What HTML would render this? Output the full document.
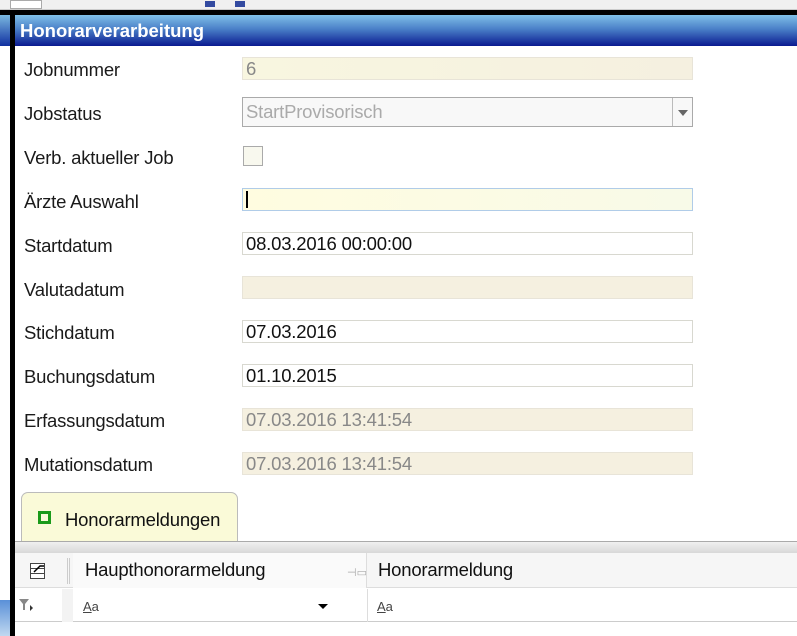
<!DOCTYPE html>
<html><head><meta charset="utf-8">
<style>
*{margin:0;padding:0;box-sizing:border-box}
body{width:797px;height:636px;overflow:hidden;background:#fff;font-family:"Liberation Sans",Arial,sans-serif;position:relative}
.abs{position:absolute}
.lbl{position:absolute;left:24px;font-size:18.5px;color:#1a1a1a;letter-spacing:-0.2px}
.fld{position:absolute;left:242px;width:451px;height:23px;border:1px solid #d8d8d0;font-size:18.5px;line-height:21px;padding:0 0 0 3px;color:#111;background:#fff;letter-spacing:-0.2px}
.ro{background:#f5f0e0;color:#888;border-color:#e8e4d8}
</style></head><body>
<div class="abs" style="left:0;top:0;width:797px;height:10px;background:#f0f0f0;border-bottom:1px solid #ccc"></div>
<div class="abs" style="left:10px;top:0;width:32px;height:9px;border:1px solid #aaa;background:#fff"></div>
<div class="abs" style="left:205px;top:1px;width:10px;height:6px;background:#334aa0"></div>
<div class="abs" style="left:235px;top:1px;width:10px;height:6px;background:#334aa0"></div>
<div class="abs" style="left:0;top:10px;width:797px;height:5px;background:#000"></div>
<div class="abs" style="left:10px;top:10px;width:5px;height:626px;background:#000"></div>
<div class="abs" style="left:0;top:15px;width:10px;height:31px;background:linear-gradient(#7ab8e0,#1030a0)"></div>
<div class="abs" style="left:0;top:600px;width:10px;height:36px;background:linear-gradient(#5a90d8,#c0d8f0)"></div>
<div class="abs" style="left:15px;top:15px;width:782px;height:31px;background:linear-gradient(#80c0e8 0%,#4a80c8 45%,#0a1a90 100%);color:#fff;font-weight:bold;font-size:18.5px;padding:5px 0 0 5px">Honorarverarbeitung</div>

<div class="lbl" style="top:59px">Jobnummer</div>
<div class="fld ro" style="top:57px;background:linear-gradient(90deg,#f8f6e0,#f5f0e0)">6</div>
<div class="lbl" style="top:103px">Jobstatus</div>
<div class="fld" style="top:97px;height:30px;border-color:#aaa;background:#f8f8f8;color:#aaa;line-height:28px">StartProvisorisch
<div class="abs" style="right:0;top:0;width:20px;height:28px;border-left:1px solid #bbb"><div class="abs" style="left:5px;top:12px;border-left:5px solid transparent;border-right:5px solid transparent;border-top:6px solid #666"></div></div></div>
<div class="lbl" style="top:147px">Verb. aktueller Job</div>
<div class="abs" style="left:243px;top:146px;width:20px;height:20px;border:1px solid #aaa;background:#f8f8ee"></div>
<div class="lbl" style="top:191px">Ärzte Auswahl</div>
<div class="fld" style="top:188px;background:linear-gradient(90deg,#fffce0,#f8fae8);border-color:#b0cce8"><span style="display:inline-block;width:2px;height:17px;background:#000;margin-top:2px"></span></div>
<div class="lbl" style="top:235px">Startdatum</div>
<div class="fld" style="top:232px">08.03.2016 00:00:00</div>
<div class="lbl" style="top:279px">Valutadatum</div>
<div class="fld ro" style="top:276px"></div>
<div class="lbl" style="top:322px">Stichdatum</div>
<div class="fld" style="top:320px">07.03.2016</div>
<div class="lbl" style="top:366px">Buchungsdatum</div>
<div class="fld" style="top:364px">01.10.2015</div>
<div class="lbl" style="top:410px">Erfassungsdatum</div>
<div class="fld ro" style="top:408px">07.03.2016 13:41:54</div>
<div class="lbl" style="top:454px">Mutationsdatum</div>
<div class="fld ro" style="top:452px">07.03.2016 13:41:54</div>

<div class="abs" style="left:21px;top:492px;width:217px;height:50px;background:#fafad8;border:1px solid #bbb;border-bottom:none;border-radius:7px 7px 0 0"></div>
<div class="abs" style="left:38px;top:511px;width:13px;height:13px;border:3px solid #1a9a1a"></div>
<div class="abs" style="left:65px;top:509px;font-size:18.5px;color:#111;letter-spacing:-0.2px">Honorarmeldungen</div>
<div class="abs" style="left:15px;top:541px;width:782px;height:12px;background:linear-gradient(#f0f0f0,#d8d8d8);border-top:1px solid #aaa"></div>
<div class="abs" style="left:15px;top:553px;width:782px;height:35px;background:#f6f6f6;border-bottom:1px solid #ddd"></div>
<svg class="abs" style="left:28px;top:560px" width="22" height="22" viewBox="0 0 22 22"><g fill="#fff" stroke="#444" stroke-width="1"><rect x="2.5" y="3.5" width="14" height="5"/><rect x="2.5" y="8.5" width="14" height="5"/><rect x="2.5" y="13.5" width="14" height="5"/></g><path d="M6 12 L12 6 L16 6" stroke="#000" stroke-width="1.5" fill="none"/></svg>
<div class="abs" style="left:67px;top:558px;width:3px;height:26px;border-left:1px solid #ccc;border-right:1px solid #ccc"></div>
<div class="abs" style="left:73px;top:553px;width:294px;height:35px;border-right:1px solid #ddd;background:#fafafa"></div>
<div class="abs" style="left:85px;top:559px;font-size:18.5px;color:#111;letter-spacing:-0.2px">Haupthonorarmeldung</div>
<div class="abs" style="left:347px;top:566px;font-size:11px;color:#aaa">⊣▭</div>
<div class="abs" style="left:378px;top:559px;font-size:18.5px;color:#111;letter-spacing:-0.2px">Honorarmeldung</div>
<div class="abs" style="left:15px;top:589px;width:782px;height:33px;background:#fff;border-bottom:1px solid #ccc"></div>
<div class="abs" style="left:62px;top:589px;width:11px;height:33px;background:#f3f3f3"></div>
<svg class="abs" style="left:18px;top:597px" width="20" height="16" viewBox="0 0 20 16"><path d="M1 2 H11 L7 7 V13 L5 13 V7 Z" fill="#888"/><path d="M12 8 L15 11 L12 14 Z" fill="#333"/></svg>
<div class="abs" style="left:83px;top:599px;font-size:13px;color:#444"><u>A</u>a</div>
<div class="abs" style="left:318px;top:604px;border-left:5px solid transparent;border-right:5px solid transparent;border-top:5px solid #000"></div>
<div class="abs" style="left:367px;top:589px;width:1px;height:33px;background:#ddd"></div>
<div class="abs" style="left:377px;top:599px;font-size:13px;color:#444"><u>A</u>a</div>
</body></html>
